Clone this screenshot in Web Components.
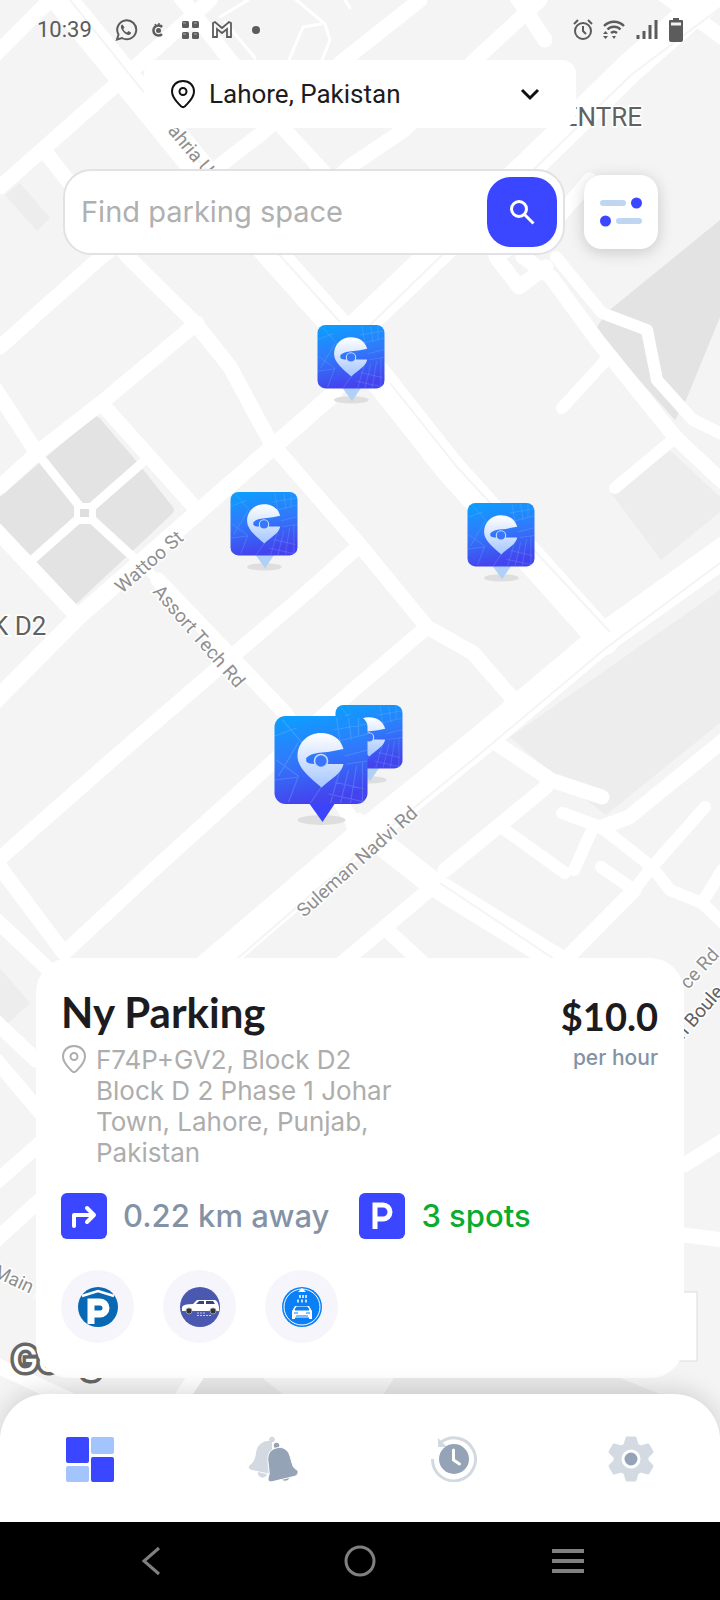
<!DOCTYPE html>
<html lang="en">
<head>
<meta charset="utf-8">
<meta name="viewport" content="width=device-width, initial-scale=1">
<title>Find parking</title>
<style>
  html, body { margin: 0; min-height: 100%; background: #f4f4f4; }
  body { font-family: Roboto, "Liberation Sans", sans-serif; color: #1c1c1e; }
</style>
</head>
<body>
<park-app></park-app>

<script>
const define = (name, html) => {
  const template = document.createElement('template');
  template.innerHTML = html;
  customElements.define(name, class extends HTMLElement {
    constructor() {
      super();
      this.attachShadow({ mode: 'open' }).append(template.content.cloneNode(true));
    }
  });
};

define('status-bar', `
<style>
  :host { display: flex; align-items: center; justify-content: space-between; height: 60px; padding: 0 35px 0 37px; color: #5c5c5c; }
  .side { display: flex; align-items: center; gap: 8px; }
  time { font: 22px/28px Roboto, sans-serif; margin-right: 14px; }
  svg { display: block; fill: none; stroke: currentColor; stroke-width: 2; }
  .solid { fill: currentColor; stroke: none; }
</style>
<div class="side">
  <time>10:39</time>
  <svg width="24" height="24" viewBox="0 0 24 24"><path d="M3 21.500l1.500-5A9.500 9.500 0 1 1 8 20z"/><path class="solid" d="M8.500 6.500c-2 .5-2 3-.5 5.500s3.500 4.500 6 5c2 .2 3-1 3-2.500l-2.500-1.400-1.500 1.400c-1.600-.6-3-2-3.700-3.600l1.200-1.500z"/></svg>
  <svg width="24" height="24" viewBox="0 0 24 24"><path d="M16 9a5 5 0 1 0 0 7" stroke-width="2.500"/><circle class="solid" cx="12.500" cy="12.500" r="2.500"/><path d="M9 6l1 2M13 5v2M16 7l-1 1" stroke-width="1.500"/></svg>
  <svg width="24" height="24" viewBox="0 0 24 24"><g class="solid"><rect x="4" y="3" width="7" height="7" rx="1.500"/><rect x="14" y="3" width="7" height="7" rx="1.500"/><rect x="4" y="14" width="7" height="7" rx="1.500"/><rect x="14" y="14" width="7" height="7" rx="1.500"/></g><path d="M5 5h3M16 5h3M5 16h3M16 16h3" stroke="#aaa" stroke-width="1"/></svg>
  <svg width="24" height="24" viewBox="0 0 24 24"><path d="M3 19V5l2-1 7 6 7-6 2 1v14h-4v-8l-5 4-5-4v8z" stroke-width="1.800"/></svg>
  <svg width="24" height="24" viewBox="0 0 24 24"><circle class="solid" cx="14" cy="12" r="4"/></svg>
</div>
<div class="side">
  <svg width="24" height="24" viewBox="0 0 24 24"><circle cx="12" cy="13" r="8"/><path d="M12 8v5l3 3M3 6l4-4M21 6l-4-4"/></svg>
  <svg width="24" height="24" viewBox="0 0 24 24"><path d="M1 8a14 14 0 0 1 20 0M4.500 11.500a9 9 0 0 1 13 0M8 15a4.500 4.500 0 0 1 6 0" stroke-width="2.400"/><path class="solid" d="M9 18h4l-2 3zM0 16l2.500-3L5 16zM0 18h5l-2.500 3z"/></svg>
  <svg width="24" height="24" viewBox="0 0 24 24"><path d="M3 21v-4M9 21v-8M15 21V7M21 21V2" stroke-width="3"/></svg>
  <svg width="18" height="24" viewBox="0 0 18 24"><path class="solid" d="M6 0h6v2h3q1 0 1 1v19q0 2-2 2H4q-2 0-2-2V3q0-1 1-1h3z"/><path d="M4 6h10" stroke="#f4f4f4" stroke-width="3"/></svg>
</div>`);

define('place-picker', `
<style>
  :host { display: block; width: 60%; margin: 0 auto; }
  label { display: grid; grid-template-columns: 24px 1fr 24px; column-gap: 15px; align-items: center; height: 68px; box-sizing: border-box; padding: 0 34px 0 26px; background: #fff; border-radius: 14px; }
  svg { fill: none; stroke: #111; stroke-width: 2; }
  select { grid-area: 1 / 2 / 2 / 4; appearance: none; border: 0; padding: 0; margin: 0; background: none; font: 26px/34px Roboto, sans-serif; color: #1c1c1e; min-width: 0; }
  .chevron { grid-area: 1 / 3; pointer-events: none; stroke-width: 3; }
</style>
<label>
  <svg width="26" height="30" viewBox="0 0 26 30"><path d="M13 2C6.500 2 2 6.500 2 12.500 2 19 7 23 11 27.300q2 1.600 4 0C19 23 24 19 24 12.500 24 6.500 19.500 2 13 2z"/><circle cx="13" cy="12.500" r="3.500"/></svg>
  <select aria-label="City"><option>Lahore, Pakistan</option></select>
  <svg class="chevron" width="24" height="24" viewBox="0 0 24 24"><path d="M4 8l8 8 8-8"/></svg>
</label>`);

define('search-bar', `
<style>
  :host { display: flex; align-items: center; gap: 19px; margin: 41px 62px 0 63px; }
  form { flex: 1; min-width: 0; display: flex; align-items: center; height: 86px; box-sizing: border-box; padding: 0 6px 0 16px; background: #fff; border: 2px solid #e2e2e4; border-radius: 28px; }
  input { flex: 1; min-width: 0; border: 0; outline: 0; padding: 0; background: none; font: 29px/36px Inter, sans-serif; color: #1c1c1e; }
  input::placeholder { color: #b0b0b0; opacity: 1; }
  button { flex: none; display: grid; place-items: center; border: 0; padding: 0; cursor: pointer; }
  .go { width: 70px; height: 70px; border-radius: 24px; background: #3a46ff; }
  .filter { width: 74px; height: 74px; border-radius: 18px; background: #fff; box-shadow: 0 3px 16px rgba(0,0,0,.18); }
</style>
<form role="search" onsubmit="return false">
  <input type="text" placeholder="Find parking space" aria-label="Find parking space">
  <button class="go" type="submit" aria-label="Search">
    <svg width="28" height="28" viewBox="0 0 28 28" fill="none" stroke="#fff" stroke-width="3"><circle cx="11" cy="11" r="7.500"/><path d="M16.500 16.500l9 9"/></svg>
  </button>
</form>
<button class="filter" type="button" aria-label="Filters">
  <svg width="44" height="30" viewBox="0 0 44 30"><path d="M4 6h20M20 24h20" stroke="#bfd6f3" stroke-width="6" stroke-linecap="round"/><circle cx="37.500" cy="6" r="5.500" fill="#3a46ff"/><circle cx="6.500" cy="24" r="5.500" fill="#3a46ff"/></svg>
</button>`);

define('street-map', `
<style>
  :host { display: block; overflow: hidden; background: #f4f4f4; }
  svg { display: block; width: 100%; height: 100%; }
  .r { fill: none; stroke: #fff; stroke-linejoin: round; stroke-linecap: round; }
  .hair { fill: none; stroke: #f4f4f4; stroke-width: 2; }
  text { font-family: Roboto, sans-serif; font-size: 19px; fill: #8f8f8f; stroke: #fff; stroke-width: 3px; paint-order: stroke; }
  .area { font-size: 26px; fill: #616161; }
  .dark { fill: #616161; }
  .logo { font: 500 35px Inter, sans-serif; fill: #fff; stroke: #666; stroke-width: 7px; }
</style>
<svg viewBox="0 0 720 1522" preserveAspectRatio="xMidYMin slice" role="img" aria-label="Street map">
  <g fill="#e3e3e3">
    <path d="M94 416q5 0 8 5l36 42 34 43q4 4 0 8L76 604 0 530V497z"/>
    <path d="M720 220L606 313l-11 17 80 90 11-20 34-83z"/>
  </g>
  <path fill="#ededed" d="M5 195l15-12 30 35-13 13zM670 450l50 47v15l-59 48-50-67zM720 590L510 737l46 40 50 38 114-92zM0 968l30 35-30 28z"/>
  <path fill="#e9e9e9" d="M380 1400l15-24h220l60 24zM190 1400l10-24h60l30 24z"/>
  <g class="r" stroke-width="15">
    <path d="M-10 60L50 0M0 187L110 90 210 0M420 0L344 60 262 133 101 257 0 347" />
    <path d="M540 0L478 57 404 130 349 167 275 240M512 -10L545 40M175 -10L285 130 340 190M660 -8L726 40"/>
    <path d="M46 153L128 257 195 323 230 367 271 443 358 543 427 627 473 653 514 700"/>
    <path d="M197 323L101 403 37 453 0 487M101 403L197 510"/>
    <path d="M-4 530L76 615M-4 390L37 453M158 580L285 713 358 830"/>
    <path d="M358 547L298 600 230 658 115 757 -4 862M427 627L330 710 275 760 161 863 64 953"/>
    <path d="M-4 862L64 953M-4 920L60 980"/>
    <path d="M-4 1060L40 1112M-4 1182L50 1135M-4 1022L36 1060M-4 1240L40 1200M-4 1365L70 1400M180 1400L200 1370"/>
    <path d="M523 257L551 277 597 340 675 437 724 483M520 240L496 257 519 287 546 267"/>
    <path d="M429 890L340 965M390 933L425 965M445 870L546 787M496 743L551 780 602 797"/>
    <path d="M602 827L629 817 724 740M634 890L565 960M560 215L590 180M684 1165L724 1140M684 1235L724 1240"/>
  </g>
  <g class="r" stroke-width="12">
    <path d="M556 257L602 313 647 330 657 380 693 420 724 435M606 360L562 408M675 438L615 488"/>
    <path d="M505 830L565 873M574 870L592 830M562 813L601 827 652 867 670 890 702 903 724 924M652 867L705 807M601 867L634 890 652 867M722 870L702 903"/>
  </g>
  <g class="r" stroke-width="9">
    <path d="M37 453L85 513 158 580M142 463L85 513 32 560"/>
  </g>
  <rect x="74" y="503" width="22" height="21" rx="4" fill="#fff"/><rect x="80" y="509" width="9" height="8" fill="#dedede"/>
  <path class="r" stroke-width="17" d="M363 350L330 397 273 447 197 513 78 617 -6 702"/>
  <g class="r" stroke-width="30">
    <path d="M54 -10L198 167 275 257 345 335 449 467 604 640"/>
    <path d="M730 -20L631 67 528 167 432 257 350 335"/>
    <path d="M730 548L601 640 482 740 358 840 200 975"/>
    <path stroke-width="24" d="M358 825L432 883 570 968"/>
  </g>
  <path class="hair" d="M70 0L198 160 275 250 340 322M390 383L457 467 610 632M724 5L631 75 528 175 440 257 370 325M724 560L606 648 482 752 358 854 230 965M440 883L560 963"/>
  <g class="r" stroke-width="3">
    <path d="M294 -2L325 24 330 40 322 60M289 60L303 27 321 24M220 17L248 0M345 0l5 8M225 22l30 36"/>
  </g>
  <text class="area" x="-8" y="635">K D2</text>
  <text class="area" x="642" y="126" text-anchor="end">ENTRE</text>
  <text transform="translate(167 131) rotate(50)">ahria U</text>
  <text transform="translate(122 594) rotate(-41)">Wattoo St</text>
  <text transform="translate(152 592) rotate(49)">Assort Tech Rd</text>
  <text transform="translate(304 918) rotate(-42)">Suleman Nadvi Rd</text>
  <text transform="translate(688 990) rotate(-47)">ce Rd</text>
  <text class="dark" transform="translate(683 1040) rotate(-49)">n Boule</text>
  <text transform="translate(-8 1276) rotate(25)">Main R</text>
  <text class="logo" x="12" y="1372">Google</text>
  <rect x="640" y="1292" width="57" height="69" fill="#fff" stroke="#dcdcdc"/>
</svg>`);

define('map-pin', `
<style>
  :host { display: block; position: absolute; width: 67px; transform: translateX(-50%); }
  :host([selected]) { width: 93px; }
  svg { display: block; width: 100%; overflow: visible; }
  .tip { fill: #b0d0f8; }
  :host([selected]) .tip { fill: #3b43fb; }
</style>
<svg viewBox="0 0 93 108" role="img" aria-label="Parking spot">
  <defs>
    <linearGradient id="tile" x2="0.2" y2="1"><stop stop-color="#0aa0ff"/><stop offset=".5" stop-color="#2f7bfb"/><stop offset="1" stop-color="#4444ee"/></linearGradient>
    <linearGradient id="glyph" x2="0" y2="1"><stop stop-color="#fff"/><stop offset="1" stop-color="#a5c6ff"/></linearGradient>
  </defs>
  <ellipse cx="47" cy="104" rx="24" ry="5" fill="#dedede"/>
  <path class="tip" d="M33 85h29l-14 21z"/>
  <rect width="93" height="88" rx="11" fill="url(#tile)"/>
  <path fill="none" stroke="#8ec6ff" stroke-opacity=".25" stroke-width="1.200" d="M0 20L22 12M8 4l24 28M4 60l20-34M2 44l22 16M24 60L14 86M0 64l24-3M62 2l4 26M74 2l3 22M58 14l35-6M60 26l33-8M70 40l23-6M72 48l21-3M66 52L56 87M74 54l-8 33M82 50l-6 37M60 66l30 7M54 78l36 8M84 2v18M88 46v40M36 87l12-18"/>
  <path fill="url(#glyph)" d="M69 33C66 22 57 17 46.500 17 33 17 23 27 23 40c0 12 12 21 24 31.500C57 62 67 58 69 48H40c-4 0-8-1-8.300-3v-3c3-3 8-5 15.300-5.500C56 36 62 34 69 33z"/>
  <circle cx="46.500" cy="45" r="6.500" fill="#3a76fb" stroke="#c4d9ff" stroke-width="1.600"/>
</svg>`);

define('icon-badge', `
<style>
  :host { display: grid; place-items: center; flex: none; width: 46px; height: 46px; border-radius: 6px; background: #3a46ff; }
  :host([round]) { width: 73px; height: 73px; border-radius: 50%; background: #f6f5fc; }
</style>
<slot></slot>`);

define('parking-card', `
<style>
  :host { display: block; margin: 0 36px 16px; padding: 30px 26px 35px 25px; box-sizing: border-box; background: #fff; border-radius: 34px; font-family: Lato, sans-serif; }
  .top { display: flex; justify-content: space-between; }
  h1 { margin: 0 0 8px; font: 700 42px/48px Lato, sans-serif; }
  address { display: grid; grid-template-columns: 26px 1fr; column-gap: 9px; font: 26px/31px Inter, sans-serif; color: #adadad; }
  address svg { fill: none; stroke: #adadad; stroke-width: 2; }
  .price { margin-top: 4px; text-align: right; }
  .price strong { display: block; font: 700 38px/48px Lato, sans-serif; }
  .price span { display: block; font: 500 21px/36px Inter, sans-serif; color: #8492a6; }
  .facts { display: flex; align-items: center; margin-top: 25px; font: 500 31px/46px Inter, sans-serif; color: #8492a6; }
  .facts span { margin: 0 30px 0 16px; }
  .facts .free { color: #09ac2e; }
  .services { display: flex; gap: 29px; margin: 31px 0 0; padding: 0; list-style: none; }
</style>
<div class="top">
  <div>
    <h1>Ny Parking</h1>
    <address>
      <svg width="26" height="30" viewBox="0 0 26 30"><path d="M13 2C6.500 2 2 6.500 2 12.500 2 19 7 23 11 27.300q2 1.600 4 0C19 23 24 19 24 12.500 24 6.500 19.500 2 13 2z"/><circle cx="13" cy="12.500" r="3.500"/></svg>
      <div>F74P+GV2, Block D2<br>Block D 2 Phase 1 Johar<br>Town, Lahore, Punjab,<br>Pakistan</div>
    </address>
  </div>
  <div class="price"><strong>$10.0</strong><span>per hour</span></div>
</div>
<div class="facts">
  <icon-badge><svg width="28" height="28" viewBox="0 0 28 28" fill="none" stroke="#fff" stroke-width="4" stroke-linejoin="round" stroke-linecap="round"><path d="M4 24V13h18M17 6l7 7-7 7"/></svg></icon-badge>
  <span>0.22 km away</span>
  <icon-badge><svg width="28" height="30" viewBox="0 0 28 30" fill="none" stroke="#fff" stroke-width="5"><path d="M7 28V4h8a6.500 6.500 0 0 1 0 14H7"/></svg></icon-badge>
  <span class="free">3 spots</span>
</div>
<ul class="services">
  <li><icon-badge round><svg width="40" height="40" viewBox="0 0 40 40" role="img" aria-label="Covered parking"><circle cx="20" cy="20" r="20" fill="#0868b4"/><path d="M4 9l16-5 16 5" fill="none" stroke="#fff" stroke-width="2.500"/><path d="M13 37V15h9a5.500 5.500 0 0 1 0 12h-9" fill="none" stroke="#fff" stroke-width="7"/></svg></icon-badge></li>
  <li><icon-badge round><svg width="40" height="40" viewBox="0 0 40 40" role="img" aria-label="Car rental"><circle cx="20" cy="20" r="20" fill="#4a58b0"/><path d="M2 20q1-3 11-3l4-4h18q3 1 4 7v4H2z" fill="#fff"/><path d="M16 17l3-3h5v3zM26 14h7l2 3h-9z" fill="#3a4478"/><circle cx="9" cy="24" r="3" fill="#333" stroke="#999"/><circle cx="33" cy="24" r="3" fill="#333" stroke="#999"/><path d="M17 26h8M17 28.500h15" stroke="#c5c9e6" stroke-dasharray="2 1"/></svg></icon-badge></li>
  <li><icon-badge round><svg width="40" height="40" viewBox="0 0 40 40" role="img" aria-label="Car wash"><circle cx="20" cy="20" r="20" fill="#0b7ff5"/><circle cx="20" cy="20" r="18" fill="none" stroke="#fff"/><path d="M16 5l4-4 4 4z" fill="#fff"/><path d="M18 8v3M21 8v3M24 8v3M16 12.500v3M20 12.500v3M24 12.500v3" stroke="#fff" stroke-width="1.500"/><path d="M10 24l3-5h14l3 5v8h-3v-1.500H13V32h-3z" fill="#fff"/><path d="M13 23l1.500-3h11l1.500 3zM12 26h4M24 26h4M14 29h12" fill="#0b7ff5" stroke="#0b7ff5"/></svg></icon-badge></li>
</ul>`);

define('tab-bar', `
<style>
  :host { display: block; position: relative; background: #fff; border-radius: 46px 46px 0 0; box-shadow: 0 -4px 24px rgba(0,0,0,.14); }
  nav { display: grid; grid-template-columns: repeat(4, 1fr); height: 128px; padding-top: 2px; box-sizing: border-box; }
  a { display: grid; place-items: center; }
</style>
<nav aria-label="Main">
  <a href="#home" aria-label="Dashboard"><svg width="48" height="46" viewBox="0 0 48 46"><g fill="#3a46ff"><rect y="1" width="23" height="26" rx="2"/><rect x="25" y="21" width="23" height="25" rx="2"/></g><g fill="#a3c4fc"><rect x="25" y="1" width="23" height="17" rx="2"/><rect y="30" width="23" height="16" rx="2"/></g></svg></a>
  <a href="#alerts" aria-label="Notifications"><svg width="60" height="46" viewBox="-6 0 60 46"><g fill="#d3d9e0"><circle cx="26" cy="3.500" r="2.800"/><path d="M26 5c-9-1-15 4-16 12-1 6-2 9-6 12-3 3 0 4 2 5l20 4V6z"/><path d="M12 36a4.500 4.500 0 0 0 9 2z"/></g><g fill="#94a3b5" stroke="#fff" stroke-width="1"><path d="M35 42l9-2c0 6-8 7-9 2z"/><circle cx="30.500" cy="9.500" r="3.300"/><path d="M30 12c-7 2-9 8-8 14l1 9c1 4-1 5-1 8 0 3 3 3 5 2.500l21-5c4-1 5-5 3-6.500-3-2-4-3-5-7l-2-7c-2-7-8-10-14-8z"/></g></svg></a>
  <a href="#history" aria-label="History"><svg width="54" height="46" viewBox="-8 0 54 46"><path d="M1.500 23A21.500 21.500 0 1 0 9 7" fill="none" stroke="#d3d9e0" stroke-width="3"/><path d="M7 2v9h9z" fill="#d3d9e0"/><circle cx="23" cy="23" r="15" fill="#94a3b5"/><path d="M22.500 14v10l6 4" fill="none" stroke="#fff" stroke-width="3" stroke-linecap="round"/></svg></a>
  <a href="#settings" aria-label="Settings"><svg width="48" height="46" viewBox="-2 0 48 46"><path fill="#d3dae1" stroke="#d3dae1" stroke-width="3" stroke-linejoin="round" d="M19 2h8l2 7 4 2 7-2 4 7-5 5v4l5 5-4 7-7-2-4 2-2 7h-8l-2-7-4-2-7 2-4-7 5-5v-4l-5-5 4-7 7 2 4-2z"/><circle cx="23" cy="23" r="8" fill="#94a3b5" stroke="#fff" stroke-width="3"/></svg></a>
</nav>`);

define('system-bar', `
<style>
  :host { display: block; position: relative; background: #000; }
  div { display: grid; grid-template-columns: repeat(3, 1fr); height: 78px; padding: 0 48px; }
  button { display: grid; place-items: center; background: none; border: 0; padding: 0; }
  svg { fill: none; stroke: #808080; stroke-width: 3; }
</style>
<div>
  <button aria-label="Back"><svg width="32" height="32" viewBox="0 0 32 32"><path d="M23 3L8 16l15 13" stroke-width="3"/></svg></button>
  <button aria-label="Home"><svg width="32" height="32" viewBox="0 0 32 32"><circle cx="16" cy="16" r="14"/></svg></button>
  <button aria-label="Recent apps"><svg width="32" height="32" viewBox="0 0 32 32"><path d="M0 6h32M0 16h32M0 26h32" stroke-width="4"/></svg></button>
</div>`);

define('park-app', `
<style>
  :host { display: flex; flex-direction: column; position: relative; min-height: 100vh; }
  .layer { position: absolute; inset: 0 0 78px; overflow: hidden; }
  street-map { height: 100%; }
  header, parking-card { position: relative; }
  .view { flex: 1; min-height: 640px; }
</style>
<div class="layer">
  <street-map></street-map>
  <map-pin style="left: 48.8%; top: 325px"></map-pin>
  <map-pin style="left: 36.7%; top: 492px"></map-pin>
  <map-pin style="left: 69.6%; top: 503px"></map-pin>
  <map-pin style="left: 51.2%; top: 705px"></map-pin>
  <map-pin selected style="left: 44.6%; top: 716px"></map-pin>
</div>
<header>
  <status-bar></status-bar>
  <place-picker></place-picker>
  <search-bar></search-bar>
</header>
<div class="view"></div>
<parking-card></parking-card>
<tab-bar></tab-bar>
<system-bar></system-bar>`);
</script>
</body>
</html>
